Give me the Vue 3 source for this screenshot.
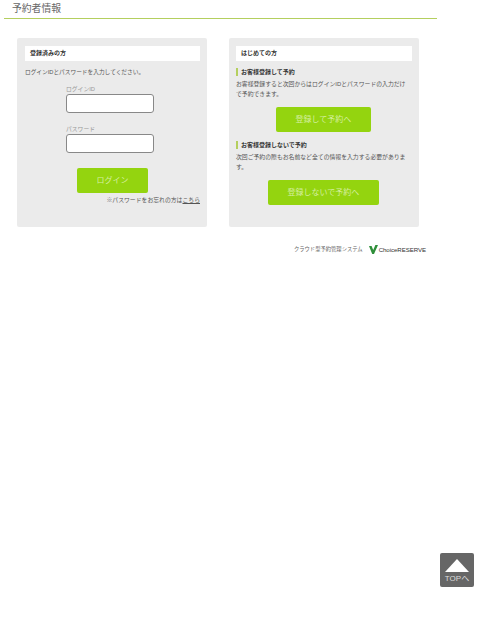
<script setup>
const brand = 'ChoiceRESERVE'
</script>

<template>
  <div class="page">
    <div class="content">
      <h1 class="title">予約者情報</h1>
      <div class="cards">
        <section class="card">
          <h2 class="card-head">登録済みの方</h2>
          <p class="lead">ログインIDとパスワードを入力してください。</p>
          <div class="form">
            <label class="field-label">ログインID</label>
            <div class="input"></div>
            <label class="field-label second">パスワード</label>
            <div class="input"></div>
          </div>
          <div class="btn login">ログイン</div>
          <p class="forgot">※パスワードをお忘れの方は<span class="link">こちら</span></p>
        </section>
        <section class="card right">
          <h2 class="card-head">はじめての方</h2>
          <h3 class="sub">お客様登録して予約</h3>
          <p class="body">お客様登録すると次回からはログインIDとパスワードの入力だけで予約できます。</p>
          <div class="btn reg">登録して予約へ</div>
          <h3 class="sub second-sub">お客様登録しないで予約</h3>
          <p class="body">次回ご予約の際もお名前など全ての情報を入力する必要があります。</p>
          <div class="btn noreg">登録しないで予約へ</div>
        </section>
      </div>
      <div class="footer">
        <span class="sys">クラウド型予約管理システム</span>
        <svg class="check" width="9" height="9" viewBox="0 0 9 9"><path d="M0 1 L2.6 1 L4.2 5 L6.4 0 L9 0 L5 9 L3.2 9 Z" fill="#2f8f3a"/></svg>
        <span class="brand">{{ brand }}</span>
      </div>
    </div>
    <div class="top">
      <svg width="24" height="13" viewBox="0 0 24 13"><path d="M12 0 L24 13 L0 13 Z" fill="#fff"/></svg>
      <span>TOPへ</span>
    </div>
  </div>
</template>

<style>
html, body { margin: 0; background: #fff; }
</style>

<style scoped>
.page {
  position: relative;
  width: 489px;
  height: 622px;
  overflow: hidden;
  font-family: "Liberation Sans", "Noto Sans CJK JP", sans-serif;
  color: #555;
}
.content { width: 437px; }
.title {
  margin: 0 0 0 4px;
  padding: 2px 0 2px 8px;
  height: 14px;
  font-size: 9.8px;
  line-height: 13px;
  font-weight: 400;
  color: #666;
  border-bottom: 1px solid #b4cf5e;
}
.cards {
  display: flex;
  gap: 22px;
  padding: 19px 0 0 17px;
}
.card {
  width: 190px;
  height: 189px;
  box-sizing: border-box;
  padding: 8px 7px 0 8px;
  background: #ebebeb;
  border-radius: 2px;
}
.card.right { padding: 8px 7px 0 7px; }
.card-head {
  margin: 0;
  height: 15px;
  padding-left: 5px;
  background: #fff;
  font-size: 6px;
  line-height: 15px;
  font-weight: 700;
  color: #333;
}
.lead {
  margin: 7px 0 0;
  font-size: 5.7px;
  line-height: 9px;
  color: #555;
}
.form { margin: 8px 0 0 41px; width: 88px; }
.field-label {
  display: block;
  font-size: 5.8px;
  line-height: 8px;
  color: #999;
}
.field-label.second { margin-top: 12px; }
.input {
  margin-top: 1px;
  height: 17px;
  background: #fff;
  border: 1px solid #888;
  border-radius: 3px;
}
.btn {
  background: #94d40f;
  color: #d4efa0;
  text-align: center;
  border-radius: 2px;
  font-size: 8px;
}
.login {
  width: 71px;
  height: 25px;
  line-height: 25px;
  margin: 15px 0 0 52px;
}
.forgot {
  margin: 3px 0 0;
  text-align: right;
  font-size: 5.85px;
  line-height: 9px;
  color: #555;
}
.link { text-decoration: underline; }
.sub {
  margin: 7px 0 0;
  height: 8px;
  padding-left: 3px;
  border-left: 2px solid #b4cf5e;
  font-size: 6px;
  line-height: 8px;
  font-weight: 700;
  color: #333;
}
.second-sub { margin-top: 9px; }
.body {
  margin: 4px 0 0;
  padding-right: 4px;
  font-size: 5.85px;
  line-height: 9.5px;
  color: #555;
}
.reg {
  width: 95px;
  height: 25px;
  line-height: 25px;
  margin: 8px 0 0 40px;
}
.noreg {
  width: 111px;
  height: 25px;
  line-height: 25px;
  margin: 8px 0 0 32px;
}
.footer {
  display: flex;
  align-items: center;
  justify-content: flex-end;
  margin: 17px 11px 0 0;
  height: 10px;
}
.sys { font-size: 5.3px; color: #666; margin-right: 6px; }
.check { margin-right: 1px; }
.brand { font-size: 6.1px; color: #333; letter-spacing: -0.05px; }
.top {
  position: absolute;
  left: 440px;
  top: 553px;
  width: 34px;
  height: 34px;
  box-sizing: border-box;
  padding-top: 6px;
  background: #666;
  border-radius: 2px;
  display: flex;
  flex-direction: column;
  align-items: center;
  color: #ddd;
  font-size: 8px;
  line-height: 9px;
}
.top span { margin-top: 2px; }
</style>
